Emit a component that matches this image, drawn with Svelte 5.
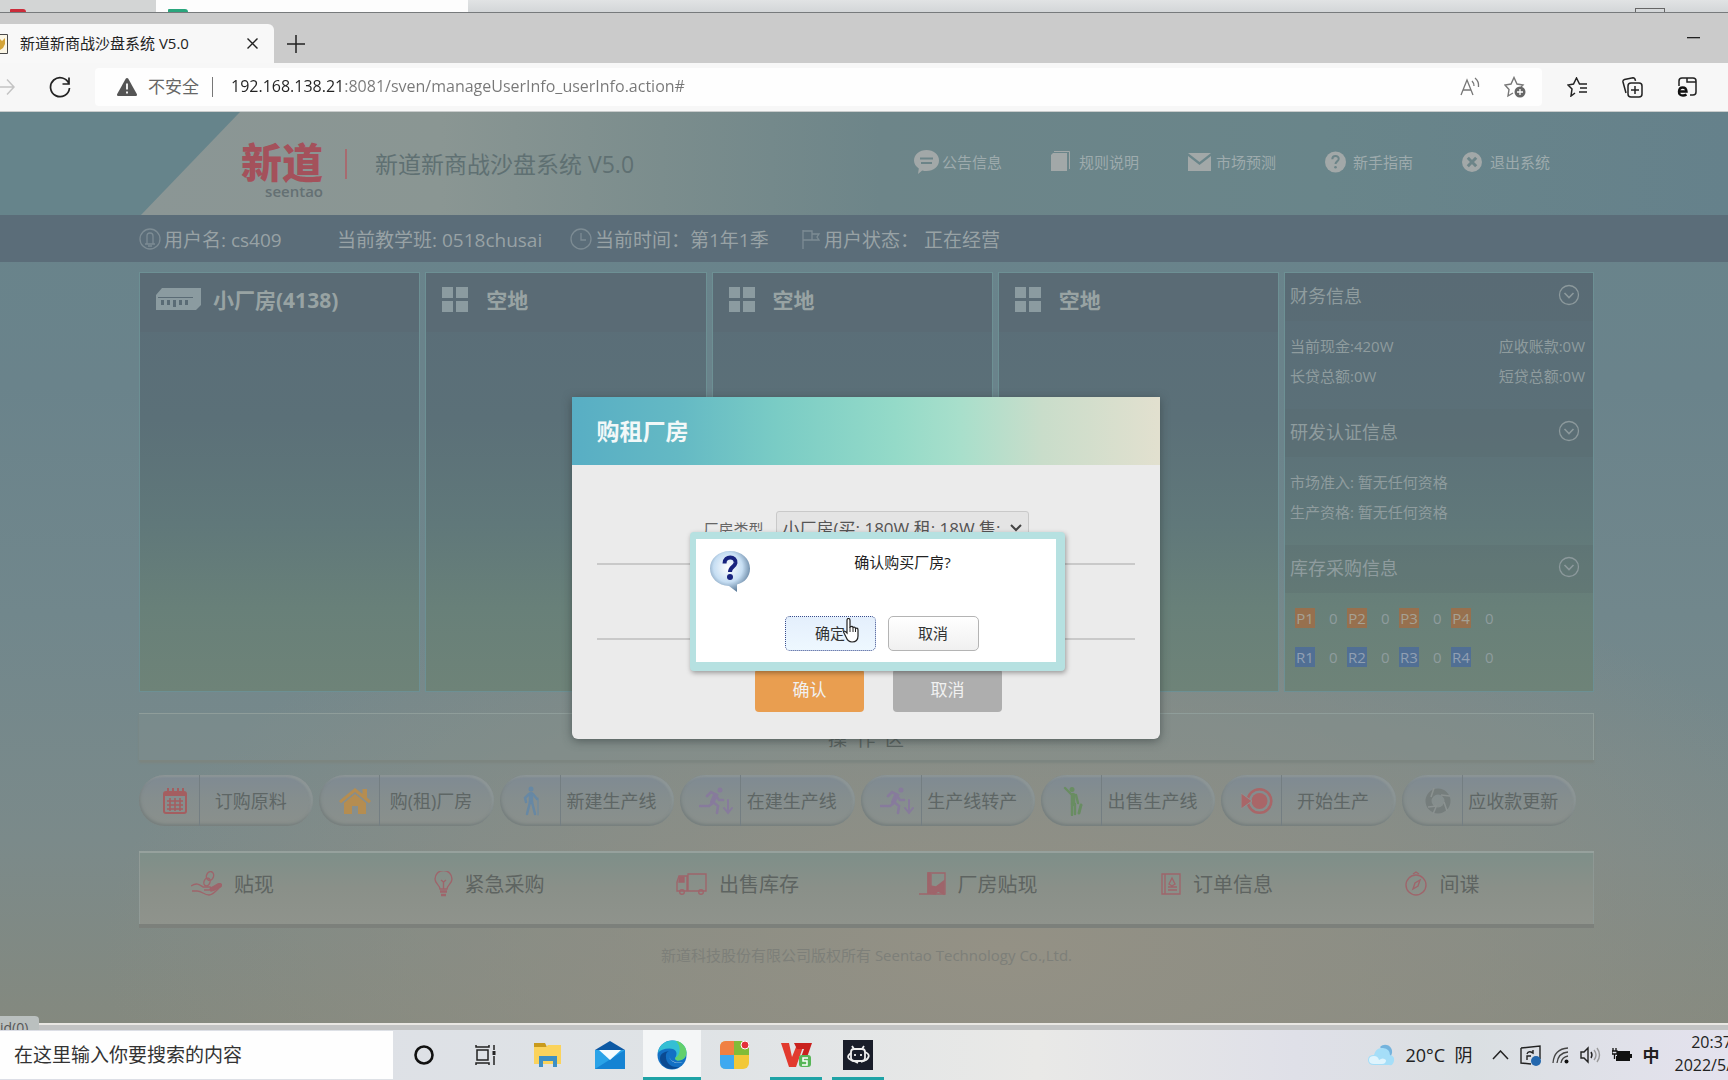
<script lang="ts">
  type Item = { icon: string; label: string }

  const navItems: Item[] = [
    { icon: 'notice', label: '公告信息' },
    { icon: 'rules', label: '规则说明' },
    { icon: 'market', label: '市场预测' },
    { icon: 'guide', label: '新手指南' },
    { icon: 'exit', label: '退出系统' },
  ]

  const plots = [
    { built: true, name: '小厂房(4138)' },
    { built: false, name: '空地' },
    { built: false, name: '空地' },
    { built: false, name: '空地' },
  ]

  const stock = [
    { kind: 'product', codes: ['P1', 'P2', 'P3', 'P4'] },
    { kind: 'material', codes: ['R1', 'R2', 'R3', 'R4'] },
  ]

  const actions: Item[] = [
    { icon: 'calendar', label: '订购原料' },
    { icon: 'house', label: '购(租)厂房' },
    { icon: 'walk', label: '新建生产线' },
    { icon: 'run', label: '在建生产线' },
    { icon: 'run', label: '生产线转产' },
    { icon: 'wave', label: '出售生产线' },
    { icon: 'start', label: '开始生产' },
    { icon: 'refresh', label: '应收款更新' },
  ]

  const extras: Item[] = [
    { icon: 'hand', label: '贴现' },
    { icon: 'bulb', label: '紧急采购' },
    { icon: 'truck', label: '出售库存' },
    { icon: 'deed', label: '厂房贴现' },
    { icon: 'order', label: '订单信息' },
    { icon: 'spy', label: '间谍' },
  ]

  let url = $state('192.168.138.21:8081/sven/manageUserInfo_userInfo.action#')
  let plant = $state('small')
</script>

{#snippet navIcon(name: string)}
  {#if name === 'notice'}
    <svg width="25" height="24" viewBox="0 0 25 24">
      <path fill="currentColor" d="M12.500 0C19.500 0 25 4.500 25 10.500S19.500 21 12.500 21c-1.500 0-3-.2-4.300-.6L4 24l.8-5.600C1.800 16.500 0 13.700 0 10.500 0 4.500 5.500 0 12.500 0z" />
      <path stroke="#6c8488" stroke-width="2" d="M6 8.500h13M7 13h11" />
    </svg>
  {:else if name === 'rules'}
    <svg width="20" height="22" viewBox="0 0 20 22">
      <path fill="currentColor" d="M2 2h14v18H0V4z" />
      <path fill="none" stroke="currentColor" d="M3 .5h15.500V18" />
    </svg>
  {:else if name === 'market'}
    <svg width="23" height="18" viewBox="0 0 23 18">
      <path fill="currentColor" d="M0 0h23L11.500 9z" />
      <path fill="currentColor" d="M0 3l11.500 9L23 3v15H0z" />
    </svg>
  {:else if name === 'guide'}
    <svg width="21" height="22" viewBox="0 0 21 22">
      <ellipse cx="10.500" cy="11" rx="10.500" ry="10.500" fill="currentColor" />
      <path fill="none" stroke="#6c8488" stroke-width="2" d="M7.300 8.300c0-4.300 6.600-4.200 6.400-.3-.1 2.400-3.200 2.400-3.200 5" />
      <circle cx="10.500" cy="16.300" r="1.300" fill="#6c8488" />
    </svg>
  {:else}
    <svg width="20" height="20" viewBox="0 0 20 20">
      <circle cx="10" cy="10" r="10" fill="currentColor" />
      <path stroke="#6c8488" stroke-width="3" d="M5.800 5.800l8.400 8.400M14.200 5.800l-8.400 8.400" />
    </svg>
  {/if}
{/snippet}

{#snippet actionIcon(name: string)}
  {#if name === 'calendar'}
    <svg width="26" height="28" viewBox="0 0 26 28" fill="none" stroke="#a45e60">
      <rect x="2" y="5" width="22" height="21" rx="2" stroke-width="2" />
      <path stroke-width="3" d="M2 7.500h22" />
      <path stroke-width="2" d="M6 1v5M11 1v5M16 1v5M21 1v5" />
      <path stroke-width="1.600" d="M5 14h16M5 18h16M5 22h16M8 11v13M13 11v13M18 11v13" />
    </svg>
  {:else if name === 'house'}
    <svg width="32" height="28" viewBox="0 0 32 28" fill="#b58d51">
      <path d="M16 1L0 14l2 2.300L16 5l14 11.300 2-2.300-4-3.400V2h-4.500v5z" />
      <path d="M5 16L16 7l11 9v11h-8v-8h-6v8H5z" />
    </svg>
  {:else if name === 'walk'}
    <svg width="28" height="30" viewBox="0 0 28 30" fill="none" stroke="#6788a4" stroke-linecap="round">
      <circle cx="9" cy="3" r="2.500" fill="#6788a4" stroke="none" />
      <path stroke-width="4.500" d="M9 8v8" />
      <path stroke-width="2.500" d="M8 16L5 28M10 16l3 12M7 8l-4 4 1 4M11 8l4 5" />
      <path stroke-width="1" d="M16 12v17" />
    </svg>
  {:else if name === 'run'}
    <svg width="34" height="28" viewBox="0 0 34 28" fill="none" stroke="#877b9c" stroke-width="2.600" stroke-linecap="round">
      <circle cx="21" cy="3" r="2.500" fill="#877b9c" stroke="none" />
      <path stroke-width="4" d="M16 8l-3 7" />
      <path d="M8 9l4-4 6 3-4 8-4 3H1M14 15l5 4-1 7M17 9l3 4h4" />
      <path stroke-width="2" d="M29 13v12M25 21l4 5 4-5" />
    </svg>
  {:else if name === 'wave'}
    <svg width="28" height="30" viewBox="0 0 28 30" fill="none" stroke="#698d62" stroke-linecap="round">
      <circle cx="9" cy="3.500" r="2.500" fill="#698d62" stroke="none" />
      <path stroke-width="4.500" d="M10 9v9" />
      <path stroke-width="2.400" d="M8 8L2 2M9 18v11M12 18v10M13 9l2 8" />
      <path stroke-width="3" d="M18 19l-2 8" />
    </svg>
  {:else if name === 'start'}
    <svg width="32" height="28" viewBox="0 0 32 28">
      <circle cx="18.500" cy="14" r="11.800" fill="none" stroke="#a96668" stroke-width="2.600" />
      <circle cx="18.500" cy="14" r="8" fill="#a96668" />
      <path fill="#a96668" stroke="#8d9291" d="M0 6l11 8-11 8z" />
    </svg>
  {:else}
    <svg width="26" height="28" viewBox="0 0 26 28" fill="none" stroke="#757d7c">
      <circle cx="13" cy="14" r="9.500" stroke-width="6" />
      <path stroke="#8b9291" stroke-width="1.600" d="M9 1l-3 9M25 9l-9-1M22 24l-3-9M3 20l9-1M8 27l3-7" />
    </svg>
  {/if}
{/snippet}

{#snippet extraIcon(name: string)}
  {#if name === 'hand'}
    <svg width="31" height="26" viewBox="0 0 31 26">
      <ellipse cx="19" cy="5" rx="3.500" ry="4.500" transform="rotate(20 19 5)" />
      <ellipse cx="16" cy="11" rx="3" ry="4" transform="rotate(20 16 11)" />
      <path d="M0 15c6-4 9-1 12 1h7c2 1 1 3-1 3h-5M20 17l8-4c3-1 3 2 1 3-4 4-7 8-11 8-5 0-7-4-12-4H1" />
      <path fill="#a45b64" d="M19 18l8-5c3-1 4 1 2 3-3 2-6 4-9 4z" />
    </svg>
  {:else if name === 'bulb'}
    <svg width="19" height="26" viewBox="0 0 19 26">
      <path d="M6 18c0-4-5-5-5-10a8 8 0 0 1 17 0c0 5-5 6-5 10zM9.500 18v-7M7 9l2.500 2L12 9" />
      <path stroke-width="2.500" d="M6 20.500h7M7 24h5" />
    </svg>
  {:else if name === 'truck'}
    <svg width="31" height="22" viewBox="0 0 31 22">
      <path d="M12 1h18v17H12zM11 3H3L1 9v9h10z" />
      <path fill="#a45b64" d="M4 4h4v5H3z" />
      <circle cx="6" cy="19" r="2.300" /><circle cx="25" cy="19" r="2.300" />
    </svg>
  {:else if name === 'deed'}
    <svg width="27" height="24" viewBox="0 0 27 24">
      <path d="M9 1h17v21H9zM12 2v12M0 22h9" />
      <path fill="#a45b64" d="M9 1h2v13l6 1 8-6v13l-6-3-3 3-7-1z" />
    </svg>
  {:else if name === 'order'}
    <svg width="20" height="22" viewBox="0 0 20 22">
      <path d="M1 1h18v20H1zM4 1v20" />
      <path d="M11 5l3 6-3 2-3-2zM7 17h9M7 14h9" />
    </svg>
  {:else}
    <svg width="24" height="25" viewBox="0 0 24 25">
      <circle cx="12" cy="14" r="10" />
      <path d="M9 3l3-2 3 2M9 18l2-6 5-3-2 6z" />
    </svg>
  {/if}
{/snippet}

{#snippet sideHeading(title: string)}
  <div class="side-heading">
    <h3>{title}</h3>
    <button type="button" aria-label={title}>
      <svg width="22" height="22" viewBox="0 0 22 22" fill="none" stroke="currentColor">
        <circle cx="11" cy="11" r="9.500" stroke-width="1.300" />
        <path stroke-width="1.600" d="M6.500 9l4.500 4.500L15.500 9" />
      </svg>
    </button>
  </div>
{/snippet}

<div class="screen">
  <!-- window behind the browser -->
  <div class="behind">
    <div class="behind-left"><span class="mark red"></span></div>
    <div class="behind-tab"><span class="mark green"></span></div>
    <div class="behind-right"><span class="sketch"></span></div>
  </div>

  <div class="tabs">
    <div class="tab">
      <svg class="favicon" width="8" height="20" viewBox="0 0 8 20">
        <path fill="#fbf6e6" stroke="#4a4a4a" d="M0 .5h7.500v19H0" />
        <path fill="#d4a437" d="M0 5l2 2 3-3v6l-2 4-3 2z" />
      </svg>
      <span class="tab-title">新道新商战沙盘系统 V5.0</span>
      <button type="button" aria-label="关闭">
        <svg width="11" height="11" viewBox="0 0 11 11"><path stroke="#222" stroke-width="1.400" d="M.5.500l10 10M10.500.500l-10 10" /></svg>
      </button>
    </div>
    <button class="new-tab" type="button" aria-label="新建">
      <svg width="18" height="18" viewBox="0 0 18 18"><path stroke="#222" stroke-width="1.500" d="M9 0v18M0 9h18" /></svg>
    </button>
    <button class="minimize" type="button" aria-label="最小化">
      <svg width="13" height="2"><path fill="#222" d="M0 0h13v1.300H0z" /></svg>
    </button>
  </div>

  <div class="toolbar">
    <svg class="forward" width="15" height="18" viewBox="0 0 15 18" fill="none" stroke="#c4c4c4" stroke-width="1.500"><path d="M0 9h14M7 1.500L14 9l-7 7.500" /></svg>
    <button class="reload" type="button" aria-label="刷新">
      <svg width="22" height="22" viewBox="0 0 22 22" fill="none" stroke="#222" stroke-width="1.700"><path d="M20 8A9.500 9.500 0 1 0 20.500 12M20 1.500V8h-6.500" /></svg>
    </button>
    <div class="address">
      <svg width="20" height="18" viewBox="0 0 20 18"><path fill="#555" d="M10 0c.6 0 1 .3 1.300.8l8.500 15.200c.5 1-.1 2-1.200 2H1.400c-1.100 0-1.700-1-1.200-2L8.700.8C9 .3 9.400 0 10 0z" /><path stroke="#fff" stroke-width="1.800" d="M10 5.500v6M10 13.500v2" /></svg>
      <span class="insecure">不安全</span>
      <input class="url" type="text" aria-label="地址" bind:value={url} />
      <svg width="20" height="20" viewBox="0 0 20 20" fill="none" stroke="#777" stroke-width="1.300"><path d="M1 18L7 3l6 15M3 13h8M12 4c1.500 1.500 2 3 2 5M15 1c2.500 2 4 5 3.500 9" /></svg>
      <svg width="22" height="22" viewBox="0 0 22 22"><path fill="none" stroke="#777" stroke-width="1.400" d="M9 17l-5 3 1-6.500L1 9l6-1 3-6.500L13 8l6 1-2 2" /><circle cx="16" cy="16" r="5.500" fill="#666" /><path stroke="#fff" stroke-width="1.300" d="M16 13v6M13 16h6" /></svg>
    </div>
    <div class="tools">
      <button type="button" aria-label="收藏夹">
        <svg width="21" height="20" viewBox="0 0 21 20" fill="none" stroke="#222" stroke-width="1.500"><path d="M8 16l-4 3 1-7-4-4 5.500-1L9.500 1l3 6H20M13 11h7M12 15h8" /></svg>
      </button>
      <button type="button" aria-label="集锦">
        <svg width="21" height="21" viewBox="0 0 21 21" fill="none" stroke="#222" stroke-width="1.500"><path d="M4 16L1 5q-.4-2 1.500-2.500L11 .8q2 0 2.500 3" /><rect x="6" y="6" width="14" height="14" rx="3" /><path d="M13 9v8M9 13h8" /></svg>
      </button>
      <button type="button" aria-label="IE 模式">
        <svg width="20" height="20" viewBox="0 0 20 20" fill="none" stroke="#222" stroke-width="1.500"><path d="M2 9V4q0-3 3-3h11q3 0 3 3v11q0 3-3 3h-3M10 1v4h9" /><path stroke="#111" stroke-width="2.400" d="M2 14.500h7.500q-.3-4-3.800-4T2 14.500t4 4q2 0 3.500-1" /></svg>
      </button>
    </div>
  </div>

  <div class="page">
    <header>
      <div class="slope"></div>
      <div class="header-inner">
        <div class="logo">
          <strong>新道</strong>
          <span>seentao</span>
        </div>
        <h1>新道新商战沙盘系统 V5.0</h1>
        <nav>
          {#each navItems as item}
            <a href="#{item.icon}">
              <span class="nav-icon">{@render navIcon(item.icon)}</span>{item.label}
            </a>
          {/each}
        </nav>
      </div>
    </header>

    <div class="status">
      <div class="status-user">
        <svg width="22" height="22" viewBox="0 0 22 22" fill="none" stroke="currentColor" stroke-width="1.300"><circle cx="11" cy="11" r="10" /><path d="M8 16V8q0-3 3-3t3 3v8M6 16h10M9 18h4" /></svg>
        <span>用户名: cs409</span>
      </div>
      <div class="status-class"><span>当前教学班: 0518chusai</span></div>
      <div class="status-time">
        <svg width="22" height="22" viewBox="0 0 22 22" fill="none" stroke="currentColor" stroke-width="1.300"><circle cx="11" cy="11" r="10" /><path d="M11 5v7h5" /></svg>
        <span>当前时间：第1年1季</span>
      </div>
      <div>
        <svg width="20" height="20" viewBox="0 0 20 20" fill="none" stroke="currentColor" stroke-width="1.300"><path d="M2 20V1M2 2h9v9H2M11 5h7l-2 3 2 3h-7" /></svg>
        <span>用户状态： 正在经营</span>
      </div>
    </div>

    <main>
      <div class="board">
        {#each plots as plot}
          <section class="plot">
            <h2>
              {#if plot.built}
                <svg width="45" height="22" viewBox="0 0 45 22"><path fill="#8b9ba0" d="M6 0h39v17l-5 5H0V7z" /><path fill="#5a6b75" d="M2 9h35v1H2zM5 12h3v5H5zM11 12h3v5h-3zM17 12h3v7h-3zM23 12h3v5h-3zM29 12h3v5h-3z" /></svg>
              {:else}
                <svg class="empty" width="26" height="25" viewBox="0 0 26 25"><path fill="#8b9ba0" d="M0 0h11v11H0zM14 0h12v11H14zM0 14h11v11H0zM14 14h12v11H14z" /></svg>
              {/if}
              <span>{plot.name}</span>
            </h2>
          </section>
        {/each}

        <aside>
          {@render sideHeading('财务信息')}
          <div class="side-body">
            <div class="pair"><span>当前现金:420W</span><span>应收账款:0W</span></div>
            <div class="pair"><span>长贷总额:0W</span><span>短贷总额:0W</span></div>
          </div>
          {@render sideHeading('研发认证信息')}
          <div class="side-body">
            <div class="pair"><span>市场准入: 暂无任何资格</span></div>
            <div class="pair"><span>生产资格: 暂无任何资格</span></div>
          </div>
          {@render sideHeading('库存采购信息')}
          <div class="stock">
            {#each stock as row}
              <div class="stock-row">
                {#each row.codes as code}
                  <span class="code {row.kind}">{code}</span><span class="count">0</span>
                {/each}
              </div>
            {/each}
          </div>
        </aside>
      </div>

      <div class="zone-title">操&ensp;作&ensp;区</div>

      <div class="actions">
        {#each actions as action}
          <button type="button">
            <span class="action-icon">{@render actionIcon(action.icon)}</span>
            <span class="action-label">{action.label}</span>
          </button>
        {/each}
      </div>

      <div class="extras">
        {#each extras as extra}
          <button type="button">{@render extraIcon(extra.icon)}<span>{extra.label}</span></button>
        {/each}
      </div>
    </main>

    <footer>新道科技股份有限公司版权所有 Seentao Technology Co.,Ltd.</footer>

    <div class="overlay">
      <div class="dialog" role="dialog" aria-labelledby="dialog-title">
        <h2 id="dialog-title">购租厂房</h2>
        <div class="dialog-body">
          <div class="field">
            <label for="plant">厂房类型</label>
            <div class="select">
              <select id="plant" bind:value={plant}>
                <option value="small">小厂房(买: 180W 租: 18W 售:</option>
              </select>
              <svg width="12" height="8" viewBox="0 0 12 8" fill="none" stroke="#444" stroke-width="2"><path d="M1 1l5 5 5-5" /></svg>
            </div>
          </div>
          <hr />
          <hr class="second" />
          <div class="dialog-buttons">
            <button class="primary" type="button">确认</button>
            <button type="button">取消</button>
          </div>
        </div>

        <div class="confirm" role="alertdialog" aria-labelledby="confirm-text">
          <div class="confirm-message">
            <svg width="42" height="42" viewBox="0 0 42 42">
              <defs>
                <radialGradient id="ball" cx="45%" cy="40%" r="60%">
                  <stop offset="0" stop-color="#fff" />
                  <stop offset=".6" stop-color="#c6def3" />
                  <stop offset="1" stop-color="#607f9d" />
                </radialGradient>
              </defs>
              <path fill="url(#ball)" d="M21 0c12 0 20 8 20 17.500 0 8-5 14-13 16V41l-8-6C9 34.500 1 27 1 17.500S9 0 21 0z" />
              <path fill="none" stroke="#17237e" stroke-width="4" d="M15.500 12.500c0-8.500 12-7.500 11-.5-.7 4-5.500 4-5.500 9" />
              <circle cx="21" cy="26" r="3" fill="#17237e" />
            </svg>
            <p id="confirm-text">确认购买厂房?</p>
          </div>
          <div class="confirm-buttons">
            <button class="focused" type="button">确定</button>
            <button type="button">取消</button>
          </div>
          <svg class="cursor" width="16" height="25" viewBox="0 0 16 25"><path fill="#fff" stroke="#222" stroke-width="1.200" d="M4 15V2.500q0-2 1.500-2T7 2.500V9q2.500-1.500 3 .5 2-1 2.500 1Q15 9.500 15 12v6q0 6-6 6-4 0-6-5l-2.500-5Q1 12 4 15z" /><path stroke="#222" d="M7 9v5M10 10v4M12.500 11v3" /></svg>
        </div>
      </div>
    </div>

    <div class="link-hint">id(0)</div>
  </div>

  <div class="window-edge"></div>

  <div class="taskbar">
    <input class="search" type="text" aria-label="搜索" placeholder="在这里输入你要搜索的内容" />
    <div class="apps">
      <button type="button" aria-label="Cortana">
        <svg width="20" height="20" viewBox="0 0 20 20"><circle cx="10" cy="10" r="8.500" fill="none" stroke="#111" stroke-width="2.600" /></svg>
      </button>
      <button type="button" aria-label="任务视图">
        <svg width="22" height="20" viewBox="0 0 22 20" fill="none" stroke="#222" stroke-width="1.500"><path d="M2 5h11v10H2zM1 0v2h13V0M1 20v-2h13v2M19 0v5M19 11v9" /><path stroke-width="3" d="M19 6v4" /></svg>
      </button>
      <button type="button" aria-label="文件资源管理器">
        <svg width="28" height="24" viewBox="0 0 28 24"><path fill="#c99a1c" d="M0 0h11l2 4H0z" /><path fill="#fbd35c" d="M0 4h12l2-2h13v19H0z" /><path fill="#3d8fc4" d="M5 24V13h18v11h-4v-6H9v6z" /></svg>
      </button>
      <button type="button" aria-label="邮件">
        <svg width="30" height="28" viewBox="0 0 30 28"><path fill="#0c59a4" d="M0 9L15 0l15 9v5H0z" /><path fill="#2aa3e8" d="M0 9h30v19H0z" /><path fill="#1583d3" d="M0 28L30 9v19z" /><path fill="#f4fbff" d="M4 9h22L15 19z" /></svg>
      </button>
      <button class="active" type="button" aria-label="Edge">
        <svg width="30" height="30" viewBox="0 0 30 30"><circle cx="15" cy="15" r="14.500" fill="#1370c4" /><path fill="#34bfd4" d="M1 13C2 4 9 .5 16 .500c8 0 13.500 6 13.500 12 0 5-4 8-8 8-3 0-4-2-3-3 3-6-1-9-6-9C7 8.500 3 10 1 13z" /><path fill="#62d06c" d="M19 1c7 1 10.500 7 10.500 11.500 0 5-4 8-8 8-3 0-4-2-3-3 5-2 6-11 .5-16.500z" /><path fill="#0a4a92" d="M9 15c-1 8 6 14 14 11.500-8 5.500-20 1-20-8C3 14 6 12 12 11c-2 1-3 2-3 4z" /><path fill="#fff" d="M12 14c0 7 6 10 14 8-5 2-14 1-14-8z" /></svg>
      </button>
      <button type="button" aria-label="应用">
        <svg width="29" height="28" viewBox="0 0 29 28"><rect width="29" height="28" rx="6" fill="#f2c838" /><path fill="#f08043" d="M6 0h8v14H0V6q0-6 6-6z" /><path fill="#81bc38" d="M14 0h9q6 0 6 6v8H14z" /><path fill="#3fa9f0" d="M0 14h14v14H6q-6 0-6-6z" /><circle cx="25" cy="4" r="4" fill="#e3313b" stroke="#fff" /></svg>
      </button>
      <button class="open" type="button" aria-label="WPS">
        <svg width="31" height="25" viewBox="0 0 31 25"><path fill="#e23a2e" d="M0 0h8l3 14 4-10h7l-7 20H8z" /><path fill="#c9211e" d="M13 0h18l-7 20h-6l5-14h-7z" /><rect x="18" y="12" width="12" height="12" rx="3" fill="#57b657" /><path fill="none" stroke="#fff" stroke-width="1.500" d="M27 15h-5v3h4v4h-5" /></svg>
      </button>
      <button class="open" type="button" aria-label="录屏">
        <svg width="30" height="30" viewBox="0 0 30 30"><path fill="#191d29" d="M0 0h30v30H0z" /><g fill="none" stroke="#eee" stroke-width="1.800"><rect x="8" y="9" width="14" height="12" rx="3" /><path d="M11 9L9 6M19 9l2-3M8 13q-7 5 3 8l4 2M22 12q7 3 1 8l-5 2M12 14v2M18 14v2" /></g></svg>
      </button>
    </div>
    <div class="tray">
      <svg width="27" height="22" viewBox="0 0 27 22"><path fill="#74b3dd" d="M12 3C17-2 25 2 24 9l-2 6z" /><path fill="#a5def8" d="M6 21q-6 0-6-5t6-5q2-8 9-7t7 7q5 1 4 6t-5 4z" /><path fill="#dff4fd" d="M6 20q-5 0-5-4t5-4q4 0 5 4 4-3 7 0 0 4-4 4z" /></svg>
      <span class="weather">20°C&nbsp; 阴</span>
      <svg width="17" height="10" viewBox="0 0 17 10" fill="none" stroke="#222" stroke-width="1.500"><path d="M1 9l7.500-8L16 9" /></svg>
      <svg width="21" height="21" viewBox="0 0 21 21"><path fill="none" stroke="#222" stroke-width="1.400" d="M1 3l19-2v13M1 3v15l10 1M7 9q1-3 4-2l2 1V5M7 15v-4h4" /><circle cx="16" cy="16" r="5" fill="#2468ae" /></svg>
      <svg width="17" height="17" viewBox="0 0 17 17" fill="none" stroke="#444" stroke-width="1.300"><path d="M1 16Q2 2 16 1M5 16Q6 6 16 5M9 16q1-6 7-7" /><circle cx="14.500" cy="14.500" r="2" fill="#111" stroke="none" /></svg>
      <svg width="21" height="18" viewBox="0 0 21 18" fill="none" stroke="#222" stroke-width="1.400"><path d="M1 6h3l4-4v14l-4-4H1zM11 6q2 3 0 6" /><path stroke="#999" d="M14 4q4 5 0 10M17 2q5 7 0 14" /></svg>
      <svg width="20" height="14" viewBox="0 0 20 14"><path fill="#111" d="M5 3h13v10H4V8h1zM18 6h2v4h-2z" /><path fill="none" stroke="#111" stroke-width="1.300" d="M1 0v3M4 0v3M0 3h5v3H0zM2.500 6v5" /></svg>
      <span class="ime">中</span>
      <span class="clock">20:37<br />2022/5/</span>
    </div>
  </div>
</div>

<style>
  :global(body) {
    margin: 0;
    overflow: hidden;
    font-family: 'Open Sans', 'Noto Sans CJK SC', sans-serif;
  }

  .screen {
    display: flex;
    flex-direction: column;
    min-height: 100vh;
    overflow: hidden;
  }

  button,
  input,
  select {
    font-family: inherit;
    border: 0;
    padding: 0;
    background: none;
  }

  h1,
  h2,
  h3,
  p {
    margin: 0;
    font-weight: normal;
  }

  svg {
    display: block;
    flex-shrink: 0;
  }

  /* browser chrome */
  .behind {
    display: flex;
    align-items: stretch;
    height: 12px;
    border-bottom: 1px solid #777a7c;
  }

  .behind-left {
    width: 156px;
    display: flex;
    align-items: flex-end;
    background: #d3d5d5;
  }

  .behind-tab {
    width: 312px;
    display: flex;
    align-items: flex-end;
    background: #fdfdfd;
  }

  .behind-right {
    flex: 1;
    display: flex;
    align-items: flex-end;
    justify-content: flex-end;
    padding-right: 63px;
    background: linear-gradient(#e1e3e4, #d3d6d8);
  }

  .mark {
    height: 3px;
    margin-left: 10px;
    width: 16px;
    border-radius: 2px 6px 0 0;
  }

  .red {
    background: #cb2c3a;
  }

  .green {
    margin-left: 12px;
    width: 20px;
    background: #2aa67d;
  }

  .sketch {
    width: 28px;
    height: 3px;
    border: 1px solid #666;
    border-bottom: 0;
  }

  .tabs {
    display: flex;
    align-items: stretch;
    height: 39px;
    padding-top: 11px;
    background: #cbcbcb;
  }

  .tab {
    display: flex;
    align-items: center;
    width: 274px;
    border-radius: 0 6px 0 0;
    background: #f8f8f8;
  }

  .tab-title {
    flex: 1;
    margin-left: 12px;
    padding-bottom: 3px;
    font-size: 15px;
    color: #222;
  }

  .tab button {
    margin-right: 16px;
  }

  .new-tab {
    margin-left: 13px;
  }

  .minimize {
    margin: 0 28px 12px auto;
  }

  .toolbar {
    display: flex;
    align-items: center;
    height: 48px;
    border-bottom: 1px solid #c9cccc;
    background: #f7f7f7;
  }

  .reload {
    margin: 0 24px 0 34px;
  }

  .address {
    flex: 1;
    display: flex;
    align-items: center;
    height: 38px;
    padding: 0 16px 0 22px;
    border-radius: 4px;
    background: #fefefe;
  }

  .insecure {
    margin-left: 11px;
    padding-right: 13px;
    border-right: 1px solid #777;
    font-size: 17px;
    line-height: 20px;
    color: #666;
  }

  /* host in black, port and path in grey */
  .url {
    flex: 1;
    margin-left: 18px;
    padding-bottom: 2px;
    font-size: 16px;
    color: transparent;
    background: linear-gradient(90deg, #222 114px, #777 114px);
    background-clip: text;
  }

  .address svg + svg {
    margin-left: 24px;
  }

  .tools {
    display: flex;
    gap: 34px;
    padding: 0 31px 0 25px;
  }

  /* the dimmed game page */
  .page {
    position: relative;
    flex: 1;
    color: #98a2a5;
    background:
      radial-gradient(ellipse 900px 420px at 58% 92%, #949185 0%, rgba(146, 144, 133, 0.6) 50%, transparent 100%),
      linear-gradient(#68848b 0%, #6a838b 30%, #71878c 55%, #7b8a8a 80%, #84897f 100%);
  }

  header {
    position: relative;
    height: 103px;
    background: #66848b;
  }

  .slope {
    position: absolute;
    inset: 0 0 0 141px;
    background: linear-gradient(90deg, #8b9695 0, #8a9693 300px, #7b8d8d 520px, #6d8589 740px, #69858a 1180px, #65818b 100%);
    clip-path: polygon(99px 0, 100% 0, 100% 100%, 0 100%);
  }

  .header-inner {
    position: relative;
    display: flex;
    align-items: center;
    height: 100%;
    padding: 0 134px 0 241px;
  }

  .logo {
    display: flex;
    flex-direction: column;
    align-items: flex-end;
    padding-top: 10px;
    color: #a4515b;
  }

  .logo strong {
    font-size: 41px;
    line-height: 44px;
    font-weight: 900;
  }

  .logo span {
    font-size: 15px;
    line-height: 14px;
    font-weight: 600;
    color: #647073;
  }

  h1 {
    margin-left: 22px;
    padding-left: 28px;
    border-left: 2px solid #a76b70;
    font-size: 23px;
    line-height: 30px;
    color: #5f7072;
  }

  nav {
    display: grid;
    grid-template-columns: repeat(5, 137px);
    margin: 0 -5px 0 auto;
  }

  nav a {
    display: flex;
    align-items: center;
    padding-bottom: 4px;
    font-size: 15px;
    color: #9eabad;
    text-decoration: none;
  }

  .nav-icon {
    width: 28px;
    color: #a2a8a8;
  }

  .status {
    display: flex;
    align-items: center;
    height: 47px;
    padding: 0 134px 0 139px;
    font-size: 19px;
    background: #5b6d79;
  }

  .status div {
    display: flex;
    align-items: center;
    gap: 3px;
    white-space: pre;
  }

  .status svg {
    color: #7d8c94;
  }

  .status .status-user {
    width: 198px;
  }

  .status .status-class {
    width: 233px;
  }

  .status .status-time {
    width: 231px;
  }

  main {
    padding: 10px 134px 0 139px;
  }

  .board {
    display: grid;
    grid-template-columns: repeat(4, 1fr) 310px;
    gap: 5px;
    min-height: 420px;
  }

  .plot,
  aside {
    border: 1px solid #6d9094;
    background: linear-gradient(#5a6d78 0%, #5b7078 35%, #60787a 60%, #688079 80%, #6e8378 100%);
  }

  .plot h2 {
    display: flex;
    align-items: center;
    height: 52px;
    padding: 0 0 7px 16px;
    font-size: 21px;
    font-weight: bold;
    color: #98a3a3;
    background: #5a6b75;
  }

  .plot h2 span {
    margin-left: 12px;
  }

  .plot h2 .empty {
    margin-right: 6px;
  }

  aside {
    font-size: 15px;
    color: #8f9c9e;
  }

  .side-heading {
    display: flex;
    align-items: center;
    justify-content: space-between;
    height: 43px;
    padding: 0 13px 5px 5px;
    background: rgba(88, 102, 108, 0.25);
  }

  .side-heading h3 {
    font-size: 18px;
  }

  .side-heading button {
    color: #8c999c;
  }

  .side-body {
    padding: 10px 8px 18px 5px;
  }

  .pair {
    display: flex;
    justify-content: space-between;
    line-height: 30px;
  }

  .stock {
    padding: 5px 10px;
  }

  .stock-row {
    display: grid;
    grid-template-columns: repeat(4, 20px 32px);
    align-items: center;
    height: 39px;
  }

  .code {
    line-height: 20px;
    text-align: center;
  }

  .product {
    color: #a6a295;
    background: #97704e;
  }

  .material {
    color: #91a0b3;
    background: #516f94;
  }

  .count {
    padding-left: 14px;
  }

  .zone-title {
    height: 46px;
    margin-top: 21px;
    border: 1px solid #8f9d9a;
    border-left: 0;
    border-bottom: 0;
    box-shadow: 0 3px 2px #7c8580;
    font-size: 19px;
    line-height: 50px;
    text-align: center;
    color: #59625f;
    background: rgba(132, 146, 141, 0.3);
  }

  .actions {
    display: grid;
    grid-template-columns: repeat(8, 1fr);
    gap: 6px;
    margin: 15px 18px 0 0;
  }

  .actions button {
    display: flex;
    align-items: stretch;
    height: 51px;
    border-radius: 26px;
    box-shadow: inset 1px -2px 3px #757e7d, inset -2px 2px 2px #8e9797;
    background: linear-gradient(#7f8a93, #858e8e 45%, #8a908c);
  }

  .action-icon {
    display: flex;
    align-items: center;
    justify-content: center;
    width: 48px;
    padding-left: 12px;
    border-right: 1px solid #747e82;
  }

  .action-label {
    flex: 1;
    margin-right: 12px;
    padding-bottom: 2px;
    align-self: center;
    font-size: 18px;
    white-space: nowrap;
    color: #5e6665;
  }

  .extras {
    display: grid;
    grid-template-columns: repeat(6, 1fr);
    height: 71px;
    margin-top: 25px;
    border-top: 2px solid #96a19d;
    border-bottom: 4px solid #7c807b;
    box-shadow: inset 1px 0 #919b97, inset -1px 0 #8e9894;
    background: linear-gradient(#7e8f89, #8a9089 50%, #8f938c);
  }

  .extras button {
    display: flex;
    align-items: center;
    gap: 12px;
    padding: 0 0 10px 52px;
    font-size: 20px;
    color: #5e6461;
  }

  .extras svg {
    fill: none;
    stroke: #a45b64;
    stroke-width: 1.4;
    opacity: 0.8;
  }

  footer {
    padding: 16px 134px 20px 139px;
    font-size: 15px;
    text-align: center;
    color: #7d7f79;
  }

  /* dialogs over the page */
  .overlay {
    position: absolute;
    inset: 0;
    display: grid;
    justify-content: center;
    align-content: start;
    padding: 285px 135px 0 138px;
  }

  .dialog {
    position: relative;
    width: 588px;
    border-radius: 0 0 6px 6px;
    box-shadow: 0 2px 10px rgba(50, 60, 60, 0.6);
    background: #ebebeb;
  }

  .dialog > h2 {
    padding-left: 25px;
    font-size: 23px;
    line-height: 68px;
    font-weight: bold;
    color: #f2f8f8;
    background: linear-gradient(90deg, #58aec4 0%, #64b9c4 18%, #7accc5 35%, #94dac8 55%, #a8dfcb 66%, #c9ddca 80%, #e2e0cf 100%);
  }

  .dialog-body {
    padding: 46px 25px 27px;
  }

  .field {
    display: flex;
    align-items: center;
    gap: 12px;
    margin-left: 107px;
    color: #666;
  }

  .field label {
    font-size: 15px;
  }

  .select {
    display: grid;
    align-items: center;
    width: 253px;
  }

  .select select {
    grid-area: 1 / 1;
    appearance: none;
    height: 34px;
    padding-left: 6px;
    border: 1px solid #c9c9c9;
    border-radius: 3px;
    font-size: 17px;
    color: #555;
    background: #e4e4e4;
  }

  .select svg {
    grid-area: 1 / 1;
    justify-self: end;
    margin-right: 7px;
    pointer-events: none;
  }

  hr {
    margin: 18px 0 0;
    border: 0;
    border-top: 2px solid #c9c9c9;
  }

  .second {
    margin-top: 73px;
  }

  .dialog-buttons {
    display: flex;
    justify-content: center;
    gap: 29px;
    margin: 29px 0 0 26px;
  }

  .dialog-buttons button {
    width: 109px;
    height: 43px;
    padding-bottom: 4px;
    border-radius: 4px;
    font-size: 17px;
    color: #f1f1f1;
    background: #aeaeae;
  }

  .dialog-buttons .primary {
    background: #e99e50;
  }

  .confirm {
    position: absolute;
    top: 135px;
    left: 118px;
    width: 360px;
    border: 8px solid #b6e1e1;
    border-width: 7px 9px 9px 6px;
    border-radius: 4px;
    box-shadow: 1px 2px 5px rgba(0, 0, 0, 0.35);
    background: #fff;
  }

  .confirm-message {
    display: flex;
    align-items: flex-start;
    padding: 12px 13px 0;
  }

  .confirm-message p {
    flex: 1;
    padding-left: 12px;
    font-size: 15px;
    line-height: 22px;
    text-align: center;
    color: #222;
  }

  .confirm-buttons {
    display: flex;
    justify-content: center;
    gap: 12px;
    margin: 23px 0 11px 12px;
  }

  .confirm-buttons button {
    width: 91px;
    height: 35px;
    padding-bottom: 2px;
    border: 1px solid #b4b4b4;
    border-radius: 5px;
    font-size: 15px;
    color: #333;
    background: linear-gradient(#fff, #f0f0f0);
  }

  .confirm-buttons .focused {
    border: 1px dotted #3a4c8c;
    background: linear-gradient(#e4effc, #eef8ff);
  }

  .cursor {
    position: absolute;
    top: 79px;
    left: 147px;
  }

  .link-hint {
    position: absolute;
    bottom: -7px;
    left: 0;
    width: 39px;
    height: 14px;
    overflow: hidden;
    z-index: 1;
    border-radius: 0 4px 0 0;
    font-size: 14px;
    line-height: 24px;
    color: #555;
    background: #bac0bf;
  }

  .window-edge {
    height: 5px;
    border-top: 2px solid #e9e7e3;
    background: #c2c3c3;
  }

  .taskbar {
    display: flex;
    height: 50px;
    background: linear-gradient(90deg, #dcdee6, #dfe3e6 40%, #e9e9e7 60%, #dfe0e8 75%, #dadfe2 85%, #e4e2ee);
  }

  .search {
    width: 393px;
    box-sizing: border-box;
    margin: 1px 0;
    padding-left: 14px;
    font-size: 19px;
    background: #fefefe;
  }

  .search::placeholder {
    color: #333;
    opacity: 1;
  }

  .apps {
    display: flex;
    gap: 4px;
    padding-left: 2px;
  }

  .apps button {
    display: grid;
    place-items: center;
    width: 58px;
    box-sizing: border-box;
    border-top: 3px solid transparent;
    border-bottom: 3px solid transparent;
  }

  .apps .active,
  .apps .open {
    border-bottom-color: #1fa3a6;
  }

  .apps .active {
    background: #f4f6f7;
  }

  .apps .open {
    width: 52px;
    margin: 0 3px;
  }

  .tray {
    display: flex;
    align-items: center;
    margin-left: auto;
    gap: 11px;
    white-space: nowrap;
    color: #222;
  }

  .weather {
    margin-right: 8px;
    padding-bottom: 2px;
    font-size: 18px;
  }

  .ime {
    padding-bottom: 2px;
    font-size: 17px;
    font-weight: bold;
  }

  .clock {
    margin: 0 -4px 0 4px;
    padding-bottom: 2px;
    font-size: 16px;
    line-height: 23px;
    text-align: right;
  }
</style>
